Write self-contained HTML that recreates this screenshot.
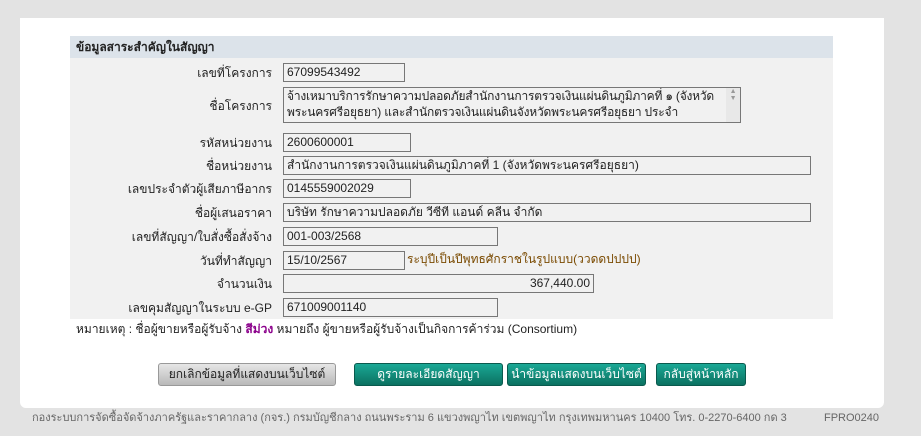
<!DOCTYPE html>
<html><head><meta charset="utf-8"><style>
body{margin:0;width:921px;height:436px;background:#e3e3e3;font-family:"Liberation Sans","Noto Sans CJK SC",sans-serif;font-size:12px;line-height:15px;color:#222;position:relative;overflow:hidden}
.panel{position:absolute;left:20px;top:18px;width:864px;height:390px;background:#fff;border-radius:0 0 6px 6px}
.tbl{position:absolute;left:70px;top:36px;width:763px;height:283px;background:#f1f1f1}
.hdr{position:absolute;left:70px;top:36px;width:763px;height:22px;background:#dce3ea;font-weight:bold;line-height:22px;text-indent:6px;color:#222}
.lb{position:absolute;right:649px;text-align:right;white-space:nowrap;line-height:15px;margin-top:3px}
.in{position:absolute;left:283px;height:19px;border:1px solid #777;background:#f1f1f1;line-height:16px;padding-left:3px;box-sizing:border-box;white-space:nowrap;overflow:hidden}
.btn{position:absolute;top:363px;height:23px;border-radius:3px;line-height:21px;text-align:center;font-size:12px;box-sizing:border-box}
.t{background:linear-gradient(#1aa895,#0b7161);color:#fff;border:1px solid #0a5a4e}
.g{background:linear-gradient(#e6e6e6,#b9b9b9);color:#222;border:1px solid #999}
</style></head><body>
<div class="panel"></div>
<div class="tbl"></div>
<div class="hdr">ข้อมูลสาระสำคัญในสัญญา</div>
<div class="lb" style="top:63px">เลขที่โครงการ</div>
<div class="in" style="top:63px;width:122px">67099543492</div>
<div class="lb" style="top:96px">ชื่อโครงการ</div>
<div class="in" style="top:87px;width:458px;height:36px;line-height:16px;white-space:normal;padding-right:16px;letter-spacing:-0.2px">จ้างเหมาบริการรักษาความปลอดภัยสำนักงานการตรวจเงินแผ่นดินภูมิภาคที่ ๑ (จังหวัด<br>พระนครศรีอยุธยา) และสำนักตรวจเงินแผ่นดินจังหวัดพระนครศรีอยุธยา ประจำ
<div style="position:absolute;right:0;top:0;width:14px;height:34px;background:#e8e8e8;font-size:7px;line-height:7px;text-align:center;color:#999">▲<br>▼</div></div>
<div class="lb" style="top:133px">รหัสหน่วยงาน</div>
<div class="in" style="top:133px;width:128px">2600600001</div>
<div class="lb" style="top:156px">ชื่อหน่วยงาน</div>
<div class="in" style="top:156px;width:528px">สำนักงานการตรวจเงินแผ่นดินภูมิภาคที่ 1 (จังหวัดพระนครศรีอยุธยา)</div>
<div class="lb" style="top:179px">เลขประจำตัวผู้เสียภาษีอากร</div>
<div class="in" style="top:179px;width:128px">0145559002029</div>
<div class="lb" style="top:203px">ชื่อผู้เสนอราคา</div>
<div class="in" style="top:203px;width:528px">บริษัท รักษาความปลอดภัย วีซีที แอนด์ คลีน จำกัด</div>
<div class="lb" style="top:227px">เลขที่สัญญา/ใบสั่งซื้อสั่งจ้าง</div>
<div class="in" style="top:227px;width:215px">001-003/2568</div>
<div class="lb" style="top:251px">วันที่ทำสัญญา</div>
<div class="in" style="top:251px;width:122px">15/10/2567</div>
<div style="position:absolute;left:407px;top:252px;color:#7a4a00">ระบุปีเป็นปีพุทธศักราชในรูปแบบ(ววดดปปปป)</div>
<div class="lb" style="top:274px">จำนวนเงิน</div>
<div class="in" style="top:274px;width:311px;text-align:right;padding-right:3px">367,440.00</div>
<div class="lb" style="top:298px">เลขคุมสัญญาในระบบ e-GP</div>
<div class="in" style="top:298px;width:215px">671009001140</div>
<div style="position:absolute;left:76px;top:322px">หมายเหตุ : ชื่อผู้ขายหรือผู้รับจ้าง <b style="color:#8b008b">สีม่วง</b> หมายถึง ผู้ขายหรือผู้รับจ้างเป็นกิจการค้าร่วม (Consortium)</div>
<div class="btn g" style="left:158px;width:178px">ยกเลิกข้อมูลที่แสดงบนเว็บไซต์</div>
<div class="btn t" style="left:354px;width:149px">ดูรายละเอียดสัญญา</div>
<div class="btn t" style="left:507px;width:139px">นำข้อมูลแสดงบนเว็บไซต์</div>
<div class="btn t" style="left:656px;width:90px">กลับสู่หน้าหลัก</div>
<div style="position:absolute;left:32px;top:411px;font-size:11px;color:#666">กองระบบการจัดซื้อจัดจ้างภาครัฐและราคากลาง (กจร.) กรมบัญชีกลาง ถนนพระราม 6 แขวงพญาไท เขตพญาไท กรุงเทพมหานคร 10400 โทร. 0-2270-6400 กด 3</div>
<div style="position:absolute;left:824px;top:411px;font-size:11px;color:#666">FPRO0240</div>
</body></html>
